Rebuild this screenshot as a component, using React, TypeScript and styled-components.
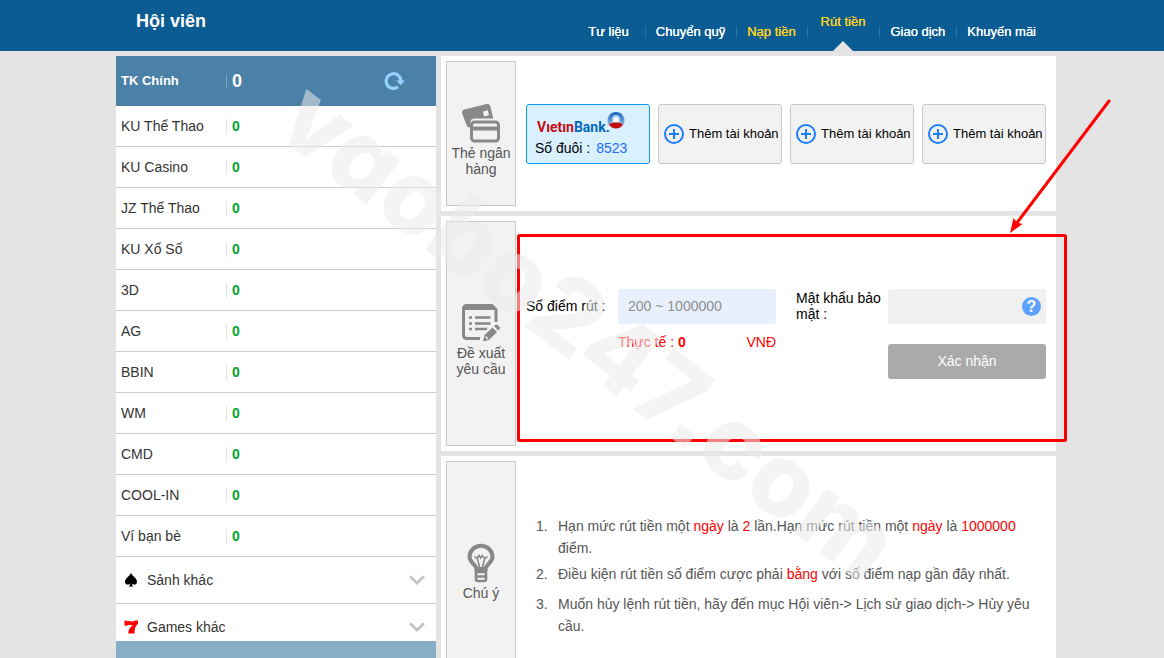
import React from "react";
import styled, { createGlobalStyle, css } from "styled-components";

const GlobalStyle = createGlobalStyle`
  *, *::before, *::after { box-sizing: border-box; }
  html { scrollbar-width: none; }
  body {
    margin: 0;
    background: #e4e4e4;
    font-family: "Liberation Sans", Arial, sans-serif;
    font-size: 14px;
    line-height: 16px;
    color: #333;
  }
  button, input { font: inherit; }
`;

const Page = styled.div`
  min-height: 100vh;
  overflow: hidden;
`;

const TopBar = styled.header`
  background: #0b5c92;
`;

const Container = styled.div`
  position: relative;
  max-width: 948px;
  margin: 0 auto;
  padding-left: 8px;
`;

const TopBarInner = styled(Container)`
  display: flex;
  justify-content: space-between;
  height: 51px;
`;

const Title = styled.h1`
  margin: 0;
  padding: 10px 20px;
  font-size: 18px;
  line-height: 22px;
  color: #fff;
`;

const Nav = styled.nav`
  display: flex;
  padding-right: 9px;
`;

const NavItem = styled.a<{ $highlight?: boolean; $active?: boolean }>`
  position: relative;
  display: flex;
  align-items: flex-start;
  padding: ${(p) => (p.$active ? "14px 14px 0" : "24px 11px 0")};
  font-size: 13px;
  color: ${(p) => (p.$highlight || p.$active ? "#ffd21c" : "#fff")};
  text-shadow: 0 0 0 currentColor;
  text-decoration: none;
  white-space: nowrap;

  &:not(:first-child)::before {
    content: "";
    position: absolute;
    left: 0;
    top: 26px;
    height: 12px;
    border-left: 1px solid #1f75ae;
  }

  &:first-child { padding-right: 16px; }

  ${(p) =>
    p.$active &&
    css`
      &::after {
        content: "";
        position: absolute;
        left: 50%;
        bottom: 0;
        margin-left: -10px;
        border: 10px solid transparent;
        border-top: 0;
        border-bottom-color: #e4e4e4;
      }
    `}
`;

const Body = styled(Container)`
  display: grid;
  grid-template-columns: 320px 1fr;
  gap: 5px;
  padding-top: 5px;
  align-items: start;
`;

const Sidebar = styled.aside`
  display: flex;
  flex-direction: column;
  height: calc(100vh - 56px);
  background: #fff;
`;

const BalanceHead = styled.div`
  display: flex;
  flex: none;
  align-items: center;
  height: 50px;
  padding: 0 30px 0 5px;
  background: #4b80a7;
  color: #fff;
  font-size: 13px;
  font-weight: bold;
`;

const RefreshButton = styled.button`
  display: flex;
  margin-left: auto;
  padding: 0;
  border: 0;
  background: none;
  cursor: pointer;
`;

const WalletName = styled.span`
  width: 105px;
`;

const WalletValue = styled.span<{ $main?: boolean }>`
  padding-left: 5px;
  border-left: 1px solid ${(p) => (p.$main ? "#7ba3c0" : "#e4e4e4")};
  color: ${(p) => (p.$main ? "#fff" : "#00a62b")};
  font-size: ${(p) => (p.$main ? "18px" : "14px")};
  font-weight: bold;
  line-height: 15px;
`;

const WalletList = styled.ul`
  flex: 1;
  min-height: 0;
  margin: 0;
  padding: 0;
  overflow: hidden;
  list-style: none;
`;

const WalletRow = styled.li`
  display: flex;
  align-items: center;
  height: 41px;
  padding: 0 5px;
  border-bottom: 1px solid #ccc;
`;

const GroupRow = styled.li`
  height: 47px;
  border-bottom: 1px solid #ccc;
`;

const GroupButton = styled.button`
  display: flex;
  align-items: center;
  gap: 8px;
  width: 100%;
  height: 100%;
  padding: 0 11px 0 7px;
  border: 0;
  background: none;
  color: #333;
  text-align: left;
  cursor: pointer;

  svg:last-child { margin-left: auto; }
`;

const SidebarFoot = styled.div`
  flex: none;
  height: 17px;
  background: #87adc7;
`;

const Main = styled.main`
  display: flex;
  flex-direction: column;
  gap: 5px;
  min-width: 0;
`;

const Section = styled.section<{ $min: number }>`
  display: flex;
  min-height: ${(p) => p.$min}px;
  padding: 5px;
  background: #fff;
`;

const SectionTab = styled.div`
  display: flex;
  flex: none;
  flex-direction: column;
  align-items: center;
  justify-content: center;
  width: 70px;
  border: 1px solid #c8c8c8;
  background: #f2f2f2;
  color: #555;
  text-align: center;

  svg { margin: 13px 0 2px; }
`;

const SectionBody = styled.div`
  display: flex;
  flex: 1;
  flex-direction: column;
  justify-content: center;
  min-width: 0;
  padding: 0 5px 0 10px;
`;

const CardGrid = styled.div`
  display: grid;
  grid-template-columns: repeat(4, 1fr);
  gap: 8px;
`;

const cardBox = css`
  height: 60px;
  border: 1px solid #c8c8c8;
  border-radius: 3px;
  background: #f2f2f2;
  color: #000;
  cursor: pointer;
`;

const AddCard = styled.button`
  ${cardBox}
  display: flex;
  align-items: center;
  gap: 5px;
  padding: 0 0 0 5px;
  font-size: 13px;
  white-space: nowrap;
`;

const BankCard = styled.button`
  ${cardBox}
  display: flex;
  flex-direction: column;
  align-items: flex-start;
  justify-content: center;
  gap: 1px;
  padding: 0 8px;
  border-color: #0a9af5;
  background: #d9f0ff;
  text-align: left;
`;

const BankLogo = styled.span`
  display: flex;
  align-items: flex-start;
  height: 28px;
  padding-left: 2px;
  font: 700 14px/32px Roboto, sans-serif;
  color: #0068b8;

  svg { margin-left: -3px; }
`;

const BankRed = styled.span`
  color: #c40d12;
`;

const CardTail = styled.span`
  margin-left: 2px;
  color: #1a6dff;
`;

const Form = styled.form`
  display: grid;
  grid-template-columns: 1fr 1fr;
  align-items: start;
  gap: 20px;
  color: #000;
`;

const Field = styled.div`
  display: grid;
  grid-template-columns: 92px 1fr;
  align-items: center;
`;

const TextInput = styled.input<{ $filled?: boolean }>`
  width: 100%;
  height: 35px;
  padding: 0 10px;
  border: 0;
  border-radius: 3px;
  background: ${(p) => (p.$filled ? "#e8f0fe" : "#f0f0f0")};

  &::placeholder { color: #8e8e8e; opacity: 1; }
`;

const PasswordBox = styled.div`
  position: relative;
`;

const HelpButton = styled.button`
  position: absolute;
  top: 8px;
  right: 5px;
  width: 19px;
  height: 19px;
  padding: 0;
  border: 0;
  border-radius: 50%;
  background: #5ea2ff;
  color: #fff;
  font-size: 16px;
  font-weight: bold;
  line-height: 19px;
  cursor: pointer;
`;

const Actual = styled.div`
  display: flex;
  grid-column: 2;
  justify-content: space-between;
  margin-top: 10px;
  color: #f00;
`;

const SubmitButton = styled.button`
  grid-column: 2;
  height: 35px;
  margin-top: 20px;
  border: 0;
  border-radius: 3px;
  background: #aaa;
  color: #fff;
  cursor: pointer;
`;

const Notes = styled.ol`
  margin: 0;
  padding: 20px 0 0 10px;
  list-style: none;
  color: #555;
  line-height: 22px;
`;

const Note = styled.li`
  display: flex;
  min-height: 30px;
  padding: 2px 0;
`;

const NoteNumber = styled.span`
  flex: none;
  width: 22px;
`;

const Red = styled.span`
  color: #f00;
`;

const Overlay = styled.svg`
  position: absolute;
  left: 0;
  top: 0;
  overflow: visible;
  pointer-events: none;
`;

const Mark = styled.text`
  font-family: Inter, "Liberation Sans", sans-serif;
  font-size: 101px;
  font-weight: 800;
  font-feature-settings: "cv11", "ss07";
  fill: rgba(235, 235, 235, 0.55);
`;

const RefreshIcon = () => (
  <svg width="22" height="20" viewBox="0 0 22 20" fill="none">
    <path d="M14 15.800A7.300 7.300 0 1 1 16.800 10" stroke="#93d2ff" strokeWidth="3.200" />
    <path d="M12.200 9.500H21L16.800 14.200Z" fill="#93d2ff" />
  </svg>
);

const ChevronIcon = () => (
  <svg width="16" height="10" viewBox="0 0 16 10" fill="none">
    <path d="M1 1.200L8 8L15 1.200" stroke="#c4c4c4" strokeWidth="2.800" />
  </svg>
);

const SpadeIcon = () => (
  <svg width="16" height="16" viewBox="0 0 16 16">
    <path d="M8 1C9.4 4 14 6.400 14 9.700C14 13 10.200 13.400 8.800 11.400C8.900 13 9.600 14 10.800 14.500H5.200C6.400 14 7.100 13 7.200 11.400C5.800 13.400 2 13 2 9.700C2 6.400 6.600 4 8 1Z" fill="#000" />
  </svg>
);

const SevenIcon = () => (
  <svg width="16" height="16" viewBox="0 0 16 16">
    <path d="M1.500 1.500H3.300L4 2.300C6.500 1.300 8.500 3.300 11 2.200L12 1.500H15V4.500C12.500 7 11.300 10 11.500 14.500H5.200C5.300 11 7 8.300 10 6C7.500 6.600 5.500 5.200 3.600 6.800H1.500Z" fill="#f00" />
  </svg>
);

const CardsIcon = () => (
  <svg width="40" height="40" viewBox="0 0 40 40">
    <path
      fillRule="evenodd"
      fill="#888"
      d="M3.500 6.600L25.500 1.100Q28.500 .5 29.300 3.300L32.300 15.500H14Q9.500 15.500 9.200 20V24.500Q6 24.400 5 20.800L1.200 10.500Q.5 7.500 3.500 6.600ZM22 8.500L23 13.500L28 12.200L26.800 7.300Z"
    />
    <rect x="10.500" y="19" width="27" height="19" rx="3" fill="none" stroke="#888" strokeWidth="3" />
    <path d="M10 25.500H38" stroke="#888" strokeWidth="4" />
  </svg>
);

const RequestIcon = () => (
  <svg width="40" height="40" viewBox="0 0 40 40" fill="none">
    <path d="M19 35.500H6Q2.500 35.500 2.500 32V6Q2.500 2.500 6 2.500H31L35 6.500V19" stroke="#888" strokeWidth="3" />
    <path d="M3 2H31L36 7H3Z" fill="#888" />
    <path d="M8 14.500H11M8 20.500H11M8 26H11M14 14.500H29.500M14 20.500H29.500M14 26H26" stroke="#888" strokeWidth="2.600" />
    <path d="M22 38.500L23.500 32L31.500 24.500L36 29L28 37Z" fill="#888" />
    <path d="M24.500 33.500L27 36" stroke="#f2f2f2" strokeWidth="1.200" />
    <path d="M33 23L34.500 21.700Q35.500 21 36.500 22L38.500 24Q39.500 25 38.600 26L37.300 27.500Z" fill="#888" />
  </svg>
);

const BulbIcon = () => (
  <svg width="40" height="40" viewBox="0 0 40 40" fill="none" stroke="#888">
    <path d="M15.500 26C15.500 21.500 8.500 20 8.500 13.800A11.500 11 0 0 1 31.500 13.800C31.500 20 24.500 21.500 24.500 26Z" strokeWidth="4" />
    <path d="M18.500 24L16.500 16L13.500 13.500M21.500 24L23.500 16L26.500 13.500M16 15L18 12.500L19.500 15L21 12.500L23.500 15" strokeWidth="1.600" />
    <path d="M15 26V36Q15 38 17 38H23Q25 38 25 36V26M15 29H25M15 33.500H25" strokeWidth="2.600" />
  </svg>
);

const PlusIcon = () => (
  <svg width="20" height="20" viewBox="0 0 20 20" fill="none" stroke="#1a7cff" strokeWidth="2">
    <circle cx="10" cy="10" r="9" />
    <path d="M10 5V15M5 10H15" />
  </svg>
);

const GlobeIcon = () => (
  <svg width="18" height="18" viewBox="0 0 18 18">
    <defs>
      <linearGradient id="sky" x1="0" y1="0" x2="0" y2="1">
        <stop offset="0" stopColor="#1c62b8" />
        <stop offset="1" stopColor="#7db3e6" />
      </linearGradient>
    </defs>
    <path d="M1.500 13.500A8.500 8.500 0 1 1 16.500 13.500L13 11.500H5Z" fill="url(#sky)" />
    <path d="M5 11.500V8A4 4 0 0 1 13 8V11.500Z" fill="#a9cdef" />
    <path d="M6.500 12V8.500A2.500 2.500 0 0 1 11.500 8.500V12Z" fill="#fff" />
    <path d="M1.800 13.200Q9 9.500 16.200 13.200Q13.500 17.500 9 17.500T1.800 13.200Z" fill="#c00d12" />
  </svg>
);

const wallets = [
  "KU Thể Thao", "KU Casino", "JZ Thể Thao", "KU Xổ Số", "3D", "AG",
  "BBIN", "WM", "CMD", "COOL-IN", "Ví bạn bè",
];

export default function App() {
  return (
    <Page>
      <GlobalStyle />
      <TopBar>
        <TopBarInner>
          <Title>Hội viên</Title>
          <Nav>
            <NavItem href="#info">Tư liệu</NavItem>
            <NavItem href="#transfer">Chuyển quỹ</NavItem>
            <NavItem href="#deposit" $highlight>Nạp tiền</NavItem>
            <NavItem href="#withdraw" $active>Rút tiền</NavItem>
            <NavItem href="#history">Giao dịch</NavItem>
            <NavItem href="#promo">Khuyến mãi</NavItem>
          </Nav>
        </TopBarInner>
      </TopBar>
      <Body>
        <Sidebar>
          <BalanceHead>
            <WalletName>TK Chính</WalletName>
            <WalletValue $main>0</WalletValue>
            <RefreshButton type="button" aria-label="Refresh"><RefreshIcon /></RefreshButton>
          </BalanceHead>
          <WalletList>
            {wallets.map((name) => (
              <WalletRow key={name}>
                <WalletName>{name}</WalletName>
                <WalletValue>0</WalletValue>
              </WalletRow>
            ))}
            <GroupRow>
              <GroupButton type="button"><SpadeIcon />Sảnh khác<ChevronIcon /></GroupButton>
            </GroupRow>
            <GroupRow>
              <GroupButton type="button"><SevenIcon />Games khác<ChevronIcon /></GroupButton>
            </GroupRow>
          </WalletList>
          <SidebarFoot />
        </Sidebar>
        <Main>
          <Section $min={155}>
            <SectionTab><CardsIcon />Thẻ ngân hàng</SectionTab>
            <SectionBody>
              <CardGrid>
                <BankCard type="button">
                  <BankLogo><BankRed>Vıetın</BankRed>Bank.<GlobeIcon /></BankLogo>
                  <span>Số đuôi : <CardTail>8523</CardTail></span>
                </BankCard>
                {[1, 2, 3].map((n) => (
                  <AddCard type="button" key={n}><PlusIcon />Thêm tài khoản</AddCard>
                ))}
              </CardGrid>
            </SectionBody>
          </Section>
          <Section $min={235}>
            <SectionTab><RequestIcon />Đề xuất yêu cầu</SectionTab>
            <SectionBody>
              <Form onSubmit={(e) => e.preventDefault()}>
                <Field>
                  <label htmlFor="amount">Số điểm rút :</label>
                  <TextInput id="amount" $filled placeholder="200 ~ 1000000" />
                  <Actual><span>Thực tế : <b>0</b></span><span>VNĐ</span></Actual>
                </Field>
                <Field>
                  <label htmlFor="pin">Mật khẩu bảo mật :</label>
                  <PasswordBox>
                    <TextInput id="pin" type="password" />
                    <HelpButton type="button">?</HelpButton>
                  </PasswordBox>
                  <SubmitButton>Xác nhận</SubmitButton>
                </Field>
              </Form>
            </SectionBody>
          </Section>
          <Section $min={219}>
            <SectionTab><BulbIcon />Chú ý</SectionTab>
            <SectionBody>
              <Notes>
                <Note>
                  <NoteNumber>1.</NoteNumber>
                  <span>Hạn mức rút tiền một <Red>ngày</Red> là <Red>2</Red> lần.Hạn mức rút tiền một <Red>ngày</Red> là <Red>1000000</Red> điểm.</span>
                </Note>
                <Note>
                  <NoteNumber>2.</NoteNumber>
                  <span>Điều kiện rút tiền số điểm cược phải <Red>bằng</Red> với số điểm nạp gần đây nhất.</span>
                </Note>
                <Note>
                  <NoteNumber>3.</NoteNumber>
                  <span>Muốn hủy lệnh rút tiền, hãy đến mục Hội viên-&gt; Lịch sử giao dịch-&gt; Hủy yêu cầu.</span>
                </Note>
              </Notes>
            </SectionBody>
          </Section>
        </Main>
        <Overlay width="948" height="600" viewBox="108 51 948 600">
          <rect x="518.500" y="235.500" width="547" height="205" rx="1" fill="none" stroke="#f00" strokeWidth="3" />
          <path d="M1109 101L1016 224" stroke="#f00" strokeWidth="3" strokeLinecap="round" />
          <path d="M1010 233L1013.500 218L1017 222.500L1022.500 224Z" fill="#f00" />
          <Mark transform="translate(272 132) rotate(37.500)">vaobo247.com</Mark>
        </Overlay>
      </Body>
    </Page>
  );
}
